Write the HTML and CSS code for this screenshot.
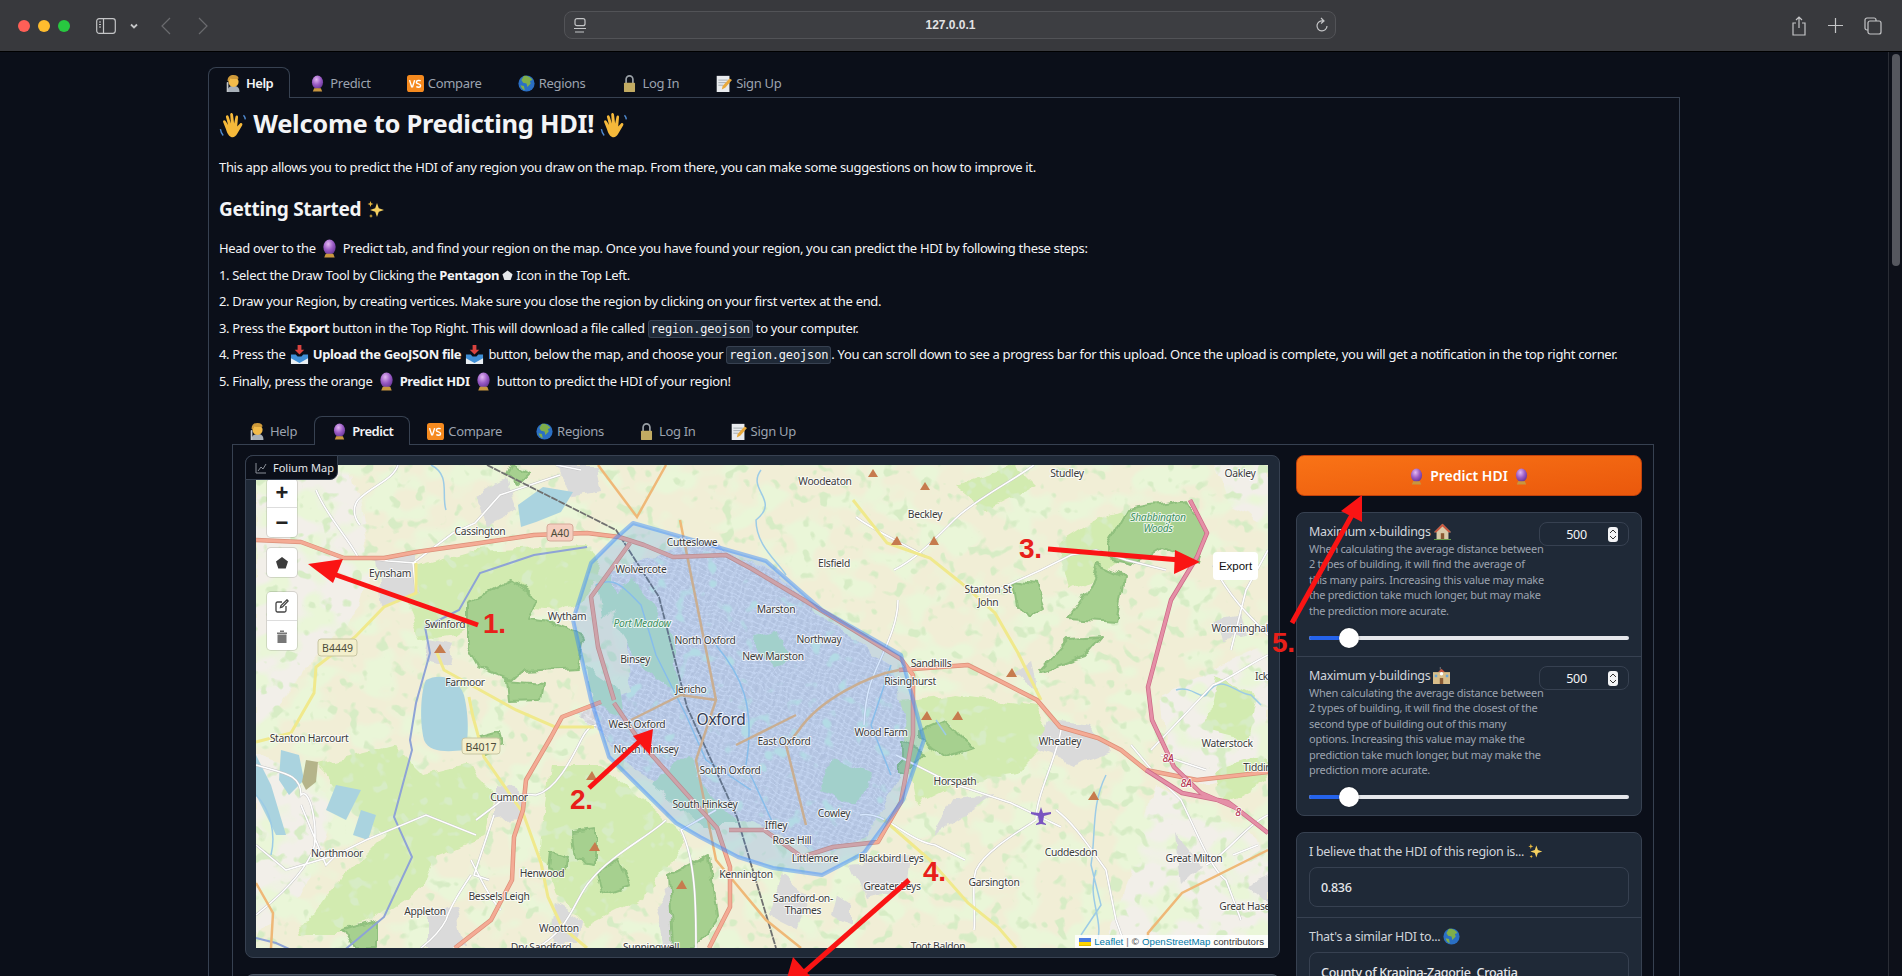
FILE: index.html
```html
<!DOCTYPE html>
<html lang="en">
<head>
<meta charset="utf-8">
<title>Predicting HDI</title>
<link rel="stylesheet" href="styles.css">
</head>
<body>
<svg class="defs" width="0" height="0" aria-hidden="true">
  <defs>
    <symbol id="e-ball" viewBox="0 0 20 20"><defs><radialGradient id="gb" cx=".4" cy=".3" r=".8"><stop offset="0" stop-color="#e3b7f2"/><stop offset=".5" stop-color="#9a5bc4"/><stop offset="1" stop-color="#5a2c8c"/></radialGradient></defs><ellipse cx="10" cy="8.500" rx="6.500" ry="8" fill="url(#gb)"/><path d="M6 15.500h8l1.500 4h-11z" fill="#c8963e"/></symbol>
    <symbol id="e-help" viewBox="0 0 20 20"><path d="M3 20c0-5 2-7 7-7s7 2 7 7z" fill="#a8b0b8"/><circle cx="10" cy="8" r="6" fill="#f2bb4a"/><path d="M3 7c0-5 3-7 7-7s6 2 6 4c-3 1-7 1-10 0 0 2-1 3-3 3z" fill="#cf9a3a"/><path d="M2 20V9c0-1 2-1 2 0v11z" fill="#c2c6ca"/></symbol>
    <symbol id="e-vs" viewBox="0 0 20 20"><rect width="20" height="20" rx="3" fill="#f58a1f"/><path d="M3 6l2.500 8h1L9 6M16 7c-1-1-5-1-5 1.500s5 1.500 5 4-4 2-5 1" fill="none" stroke="#fff" stroke-width="1.700"/></symbol>
    <symbol id="e-globe" viewBox="0 0 20 20"><circle cx="10" cy="10" r="9.500" fill="#2a6fc4"/><path d="M7 1c3-1 8 1 10 5l-3 1 1 3-4 4-1-4-4-1-2-3zM3 12l4 1 1 5c-3-1-4-3-5-6z" fill="#7fae4a"/></symbol>
    <symbol id="e-lock" viewBox="0 0 20 20"><path d="M6 10V5a4 4 0 0 1 8 0v5" fill="none" stroke="#9aa0a6" stroke-width="2"/><rect x="3.500" y="9" width="13" height="11" rx="1" fill="#c2ab62"/></symbol>
    <symbol id="e-memo" viewBox="0 0 20 20"><rect x="2" y="1" width="15" height="19" fill="#e9ebee"/><path d="M4 6h11M4 9h9M4 12h6" stroke="#9aa0a6"/><path d="M8 17l1-4 8-9 3 2-8 9z" fill="#e8a93c"/></symbol>
    <symbol id="e-wave" viewBox="0 0 20 20"><path d="M5 13L3 8c-.5-1.500 1-2 1.700-.8L6.500 10 5 4.500c-.4-1.500 1.400-2 1.900-.6L8.500 9 8 2.500c0-1.500 1.800-1.500 2 0l.8 6.500 1-5c.3-1.400 2-1 1.800.4L13 11l2-2c1-1 2.300.2 1.500 1.300l-3.500 6C11 20 7 20 5 13z" fill="#f6b93a"/><path d="M1 13c.3 2 1 3.500 2 4.500M17.500 3c.8.8 1.200 1.800 1.300 3" stroke="#4f8ad0" fill="none"/></symbol>
    <symbol id="e-spark" viewBox="0 0 20 20"><path d="M11 3l1.800 5.200L18 10l-5.200 1.800L11 17l-1.800-5.200L4 10l5.200-1.800z" fill="#f5d060"/><path d="M4.500 1l.8 2.200 2.200.8-2.200.8-.8 2.200-.8-2.200L1.500 4l2.200-.8zM5 14l.6 1.400L7 16l-1.400.6L5 18l-.6-1.400L3 16l1.400-.6z" fill="#e8b93f"/></symbol>
    <symbol id="e-inbox" viewBox="0 0 20 20"><path d="M8 0h4v5h3l-5 5-5-5h3z" fill="#d9433f"/><path d="M1 10h5l2 2h4l2-2h5v9H1z" fill="#3f8fd6"/><path d="M1 14l9 5 9-5v6H1z" fill="#e9eef2"/></symbol>
    <symbol id="e-house" viewBox="0 0 20 20"><path d="M10 1L0 11h3v8h14v-8h3z" fill="#d8c9a8"/><path d="M10 1L0 11h3l7-7 7 7h3z" fill="#c9553d"/><rect x="8" y="12" width="4" height="7" fill="#8a5a34"/><path d="M0 19h20v1H0z" fill="#6fae4f"/></symbol>
    <symbol id="e-school" viewBox="0 0 20 20"><rect x="0" y="6" width="20" height="14" fill="#d8bd8a"/><path d="M6 6l4-4 4 4z" fill="#c9553d"/><rect x="8" y="0" width="1" height="3" fill="#888"/><rect x="2" y="9" width="3" height="3" fill="#6aa6d8"/><rect x="15" y="9" width="3" height="3" fill="#6aa6d8"/><rect x="8" y="13" width="4" height="7" fill="#8a5a34"/><circle cx="10" cy="8" r="2" fill="#fff"/></symbol>
  </defs>
</svg>

<header class="chrome">
  <div class="lights"><i class="light red"></i><i class="light amber"></i><i class="light green"></i></div>
  <svg class="tool sidebar-ic" width="20" height="16" viewBox="0 0 20 16"><rect x=".7" y=".7" width="18.600" height="14.600" rx="2.500"/><path d="M7.500 1v14M3 4h2M3 6.500h2M3 9h2"/></svg>
  <svg class="tool chev-ic" width="8" height="6" viewBox="0 0 8 6"><path d="M1 1.500l3 3 3-3"/></svg>
  <svg class="tool dim back-ic" width="10" height="18" viewBox="0 0 10 18"><path d="M9 1L1 9l8 8"/></svg>
  <svg class="tool dim fwd-ic" width="10" height="18" viewBox="0 0 10 18"><path d="M1 1l8 8-8 8"/></svg>
  <div class="address">
    <svg class="tool site-ic" width="12" height="15" viewBox="0 0 12 15"><rect x="1" y=".7" width="10" height="7" rx="2"/><path d="M0 10.500h12M1 14h9"/></svg>
    <span class="url">127.0.0.1</span>
    <svg class="tool reload-ic" width="13" height="16" viewBox="0 0 13 16"><path d="M8 4a5 5 0 1 0 4 5M6 1l3 3-3 2.500"/></svg>
  </div>
  <div class="chrome-right">
    <svg class="tool" width="16" height="20" viewBox="0 0 16 20"><path d="M8 12V1M5 4l3-3 3 3M5 7H2v12h12V7h-3"/></svg>
    <svg class="tool" width="15" height="15" viewBox="0 0 15 15"><path d="M7.500 0v15M0 7.500h15"/></svg>
    <svg class="tool" width="18" height="18" viewBox="0 0 18 18"><rect x="4" y="4" width="13" height="13" rx="2"/><path d="M4 13H3a2 2 0 0 1-2-2V3a2 2 0 0 1 2-2h7a2 2 0 0 1 2 2v1"/></svg>
  </div>
</header>

<div class="viewport">
  <main class="app">
    <nav class="tabs">
      <span class="tab active"><svg class="em"><use href="#e-help"/></svg>Help</span>
      <span class="tab"><svg class="em"><use href="#e-ball"/></svg>Predict</span>
      <span class="tab"><svg class="em"><use href="#e-vs"/></svg>Compare</span>
      <span class="tab"><svg class="em"><use href="#e-globe"/></svg>Regions</span>
      <span class="tab"><svg class="em"><use href="#e-lock"/></svg>Log In</span>
      <span class="tab"><svg class="em"><use href="#e-memo"/></svg>Sign Up</span>
    </nav>
    <section class="panel">
      <h1><svg class="em"><use href="#e-wave"/></svg> Welcome to Predicting HDI! <svg class="em"><use href="#e-wave"/></svg></h1>
      <p class="intro">This app allows you to predict the HDI of any region you draw on the map. From there, you can make some suggestions on how to improve it.</p>
      <h2>Getting Started <svg class="em"><use href="#e-spark"/></svg></h2>
      <p>Head over to the <svg class="em"><use href="#e-ball"/></svg> Predict tab, and find your region on the map. Once you have found your region, you can predict the HDI by following these steps:</p>
      <p>1. Select the Draw Tool by Clicking the <b>Pentagon</b> <svg class="pent" viewBox="0 0 12 12"><path d="M6 .5l5.500 4-2 6.500H2.500l-2-6.500z"/></svg> Icon in the Top Left.</p>
      <p>2. Draw your Region, by creating vertices. Make sure you close the region by clicking on your first vertex at the end.</p>
      <p>3. Press the <b>Export</b> button in the Top Right. This will download a file called <code>region.geojson</code> to your computer.</p>
      <p>4. Press the <svg class="em"><use href="#e-inbox"/></svg> <b>Upload the GeoJSON file</b> <svg class="em"><use href="#e-inbox"/></svg> button, below the map, and choose your <code>region.geojson</code>. You can scroll down to see a progress bar for this upload. Once the upload is complete, you will get a notification in the top right corner.</p>
      <p>5. Finally, press the orange <svg class="em"><use href="#e-ball"/></svg> <b>Predict HDI</b> <svg class="em"><use href="#e-ball"/></svg> button to predict the HDI of your region!</p>

      <div class="inner">
        <nav class="tabs inner-tabs">
          <span class="tab"><svg class="em"><use href="#e-help"/></svg>Help</span>
          <span class="tab active"><svg class="em"><use href="#e-ball"/></svg>Predict</span>
          <span class="tab"><svg class="em"><use href="#e-vs"/></svg>Compare</span>
          <span class="tab"><svg class="em"><use href="#e-globe"/></svg>Regions</span>
          <span class="tab"><svg class="em"><use href="#e-lock"/></svg>Log In</span>
          <span class="tab"><svg class="em"><use href="#e-memo"/></svg>Sign Up</span>
        </nav>
        <div class="inner-panel">
          <div class="left-col">
            <div class="map-block">
              <div class="map-label"><svg class="chart-ic" width="12" height="12" viewBox="0 0 12 12"><path d="M1 1v10h10M3 9l3-4 2 2 3-5"/></svg>Folium Map</div>
              <div class="map">
                <svg class="map-svg" viewBox="0 0 1012 483" width="1012" height="483">
                  <defs>
                    <filter id="wobble" x="-5%" y="-5%" width="110%" height="110%"><feTurbulence type="fractalNoise" baseFrequency=".04" numOctaves="3" seed="4"/><feDisplacementMap in="SourceGraphic" scale="14" xChannelSelector="R" yChannelSelector="G"/></filter>
                    <filter id="fields" x="0" y="0" width="100%" height="100%"><feTurbulence type="fractalNoise" baseFrequency=".028 .035" numOctaves="2" seed="11"/><feColorMatrix values="0 0 0 0 .82  0 0 0 0 .92  0 0 0 0 .69  7 0 0 0 -3.400"/></filter>
                    <filter id="specks" x="0" y="0" width="100%" height="100%"><feTurbulence type="fractalNoise" baseFrequency=".075" numOctaves="2" seed="23"/><feColorMatrix values="0 0 0 0 .68  0 0 0 0 .84  0 0 0 0 .56  10 0 0 0 -6.100"/></filter>
                    <filter id="parks" x="0" y="0" width="100%" height="100%"><feTurbulence type="fractalNoise" baseFrequency=".06" numOctaves="2" seed="7"/><feColorMatrix values="0 0 0 0 .66  0 0 0 0 .87  0 0 0 0 .74  8 0 0 0 -4.900"/></filter>
                    <clipPath id="city-clip"><path d="M410 85l50-5 60 30 50 45 65 45 15 50-5 60-35 65-50 12-70-30-60-20-50-30-30-35-30-25 55-20-5-60-15-60z"/></clipPath>
                    <pattern id="streets" width="14" height="10" patternUnits="userSpaceOnUse" patternTransform="rotate(24)">
                      <rect width="14" height="10" fill="#d5d5db"/>
                      <path d="M0 3.500h14M0 8.500h14M5 0v10M11 0v10" stroke="#eeeef2" stroke-width=".8"/>
                      <path d="M2 0v3M8 3v5" stroke="#bcbcc6" stroke-width=".5"/>
                    </pattern>
                    <path id="a-roads" d="M0 75l45 2 43 16h40l32-6 64-9 54-8 53-2 32 4 25 8 29 12 53-2 26 14 77 46 72 44 12 16v60l-12 67-23 40-45 5-31 10-38-27h-35M374 78l-39 54 7 50 16 53M358 238l27 40 76 85 13 39v40l-21 41M345 237l-39 15-11 20-25 43-3 30-9 27-2 43-21 40-36 28M643 205l69-5 30 15 39 20 23 27 38 11 23 12 25 20 51 10 71-8"/>
                    <path id="m-roads" d="M934 35l17 33-10 24-26 43-23 87 4 33 22 47 27 26 35 15 32 25M890 305l36 23 46 9 8 6"/>
                    <g id="white-roads">
                      <path d="M60 25c10 25 30 45 42 67M142 0c-5 15-25 20-40 35-6 8-4 18 2 25M102 92l30 4 28 2M160 128l-3-30 40-30 22-10 25-28 60-20M325 5l-25-5"/>
                      <path d="M0 300c25 8 45 8 45 30 10-10 20 45 10 60-10 20-30 40-55 60M45 340l25 60 12-12M0 380l30 25 50-15 30-15 60-25 50 20"/>
                      <path d="M220 355l20-15c8-8 25-12 40-10 20-5 35-35 45-55 5-10 10-15 15-15M215 410c-10 15-20 30-25 45-5 10-15 20-25 28M215 395c10 20 20 40 30 50M238 350l-20 60 15 5M410 355c-15 15-55 35-75 60-15 15-20 50-55 68M460 345l-35 20c15 30 15 80 15 118"/>
                      <path d="M642 135c0 30-20 60-28 85-3 10-5 20-6 40M778 0c-20 15-60 35-80 55-25 25-40 40-60 50M604 350c25-5 45 25 75 30l30 15M640 290l55 28 60 20 50 24M805 265c-5 30-25 65-25 90-15 10-50 30-60 50-5 15 0 45-2 60M800 345c20 15 35 40 50 60l10 50 10 28M1012 190c-20 10-40 25-55 30l-62 65M905 290l45 15M875 280l25 30 25 25c15 30 30 70 45 80l15 40M957 100c15 30 35 50 55 70M975 185l15-60 22-40M950 400c20-10 40-40 62-50M1002 380l-25 10"/>
                      <path d="M600 52c20 15 45 25 70 40M730 130l55-25 30-15 25-5 30 10 40 10"/>
                    </g>
                  </defs>
                  <g class="soft">
                    <rect class="land" width="1012" height="483"/>
                    <path class="bare wob" d="M0 0h95l20 90-10 50-60 70-45 60zM0 290l60 20 20 40-30 70-50 50zM905 230l60-30 47-20v120l-60 20-40-10zM900 320l112 60v103H850zM1012 0v60l-40-20-20-60z"/>
                    <rect width="1012" height="483" class="noise-fields"/>
                    <g class="light-green wob">
                      <path d="M150 105l70-20 110-5 15 25-15 30-30 10-55-5-45 30-35 5-15-35z"/>
                      <path d="M295 300h50l55 45 30 30-30 45-30 20-40 20-30-30-15-50z"/>
                      <path d="M60 300l80-20 30 30 40-10 30 30-10 40-50 20-15 30-45 30-40 20-40 0 30-40 30-30 30-30-40-30-20-30z"/>
                      <path d="M620 240l80-10 80 10 20 30-40 40-60 10-40 20-10-50z"/>
                      <path d="M800 80l40-25 30-10 20 30-40 30-40 20zM700 20l60-20 20 20-50 25zM960 210l40 20-10 45-40-10zM960 305l50-15 2 25-45 25z"/>
                    </g>
                    <rect width="1012" height="483" class="noise-specks"/>
                    <g class="urban wob">
                      <path d="M120 92l40-2 5 40-40 10zM172 175l25 5-3 20-25-5zM220 30l30-15 10 30-30 15zM300 0l40 0 5 25-30 5zM240 320l20 5 5 25-25 5zM400 440l30-40 10 83-30 0zM170 450l30-10 10 43-40 0zM300 440l25 15-5 25-25 0zM345 250l20 0 30 30-30 10zM525 410l30 25-15 30-30-15zM595 400l60-10-5 35-40 10zM795 255l40 5 20 25-40 15-35-15zM960 155l25-5 5 20-25 5zM698 335l-20 35 60-40zM755 210l20-15 5 30zM920 370l25 30-20 20zM580 430l15 10 0 20-20-10zM990 420l22-10 0 30z"/>
                    </g>
                    <path class="city wob" d="M410 85l50-5 60 30 50 45 65 45 15 50-5 60-35 65-50 12-70-30-60-20-50-30-30-35-30-25 55-20-5-60-15-60z"/>
                    <g clip-path="url(#city-clip)"><rect width="1012" height="483" class="noise-parks"/></g>
                    <g class="meadow wob">
                      <path d="M353 132l25-17 17 23 22 37 7 53-39-26-25-40z"/>
                      <path d="M430 290l25 40 30 30-40 0-50-40zM495 170l25-5 15 30-20 10zM575 295l40 15-15 30-35-15zM330 200l30 20 5 30-30-10zM340 120l20-10 0 30-15 15z"/>
                    </g>
                    <g class="forest wob">
                      <path d="M213 138l43-23 25 17-9 23 23 3 33 14-6 30-55 3-11 10-32-13-11-20z"/>
                      <path d="M251 215l37 3-3 17-32 1z"/>
                      <path d="M850 80l20-35 60-10 20 35-8 25-37-13-30 18-25-5z"/>
                      <path d="M758 115l23 3 9 24-17 10-11-14z"/>
                      <path d="M842 100l27 12-8 46-50-3 19-27z"/>
                      <path d="M783 205l28-30 35-2-16 19-45 16z"/>
                      <path d="M666 265l23-10 27 28-27 9-23-17z"/>
                      <path d="M643 275l27 13-19 20-8-3z"/>
                      <path d="M88 465l32-10v28H99zM317 368l21-3v33l-18-3zM413 412l39-20 8 60-22 31h-21z"/>
                      <path d="M255 0l15 8-12 12-8-10zM295 385l15 5-2 20-15-5zM225 270l18-5 3 15-18 8zM340 405l25-10 10 25-30 10z"/>
                    </g>
                    <g class="water">
                      <path d="M170 215c12-6 30-5 38 15 6 25 4 50 0 55-15 2-35 3-40-10-5-20-3-50 2-60z"/>
                      <path d="M25 285l18 5 5 25-15 15-10-15zM80 320l25 5-15 30-20-10zM105 345l15 5-8 25-15-5zM0 290l15 30 15 50-10 0-20-40zM262 40l25-18 30 5-12 20-25 10-15 5z"/>
                    </g>
                    <g class="scrub"><path d="M50 295l12 2-2 20-10 8-4-8z"/></g>
                    <path class="river" d="M331 82l-53 8-54 18-21 37-34 17 5 26-14 50-6 37 2 10-18 67 18 40-28 60-43 36-32 5-33-15-20-5"/>
                    <path class="stream" d="M505 5c-15 20 20 30-5 50 0 25 20 40 30 55M340 120c20-10 30 5 45 20l15 50 30 60 20 45 45 30M460 180c25 30 40 60 30 120l30 65M0 330c15 15 20 40 15 60M635 200l-20 60 20 50M920 225c15-5 25 10 30 5 15-25 30 0 45 0l10 10M850 310c-15 30-10 60-15 90l10 40-20 30M175 0c20 10 10 30 15 45M690 270l-10-15M840 405c-10 30 10 50 0 78"/>
                    <use href="#white-roads" class="road-case"/>
                    <use href="#white-roads" class="road-white"/>
                    <path class="rail" d="M231 0l129 65 43 67 28 110 50 110 39 131"/>
                    <path class="road-yellow" d="M160 98v30l-32 14-29 30-39 30-2 26-23 40-35 9M181 188l7 17 36 20 36 20 39 17h39M213 232l4 20 11 40 39 56 18 50 7 34 14 30 25 21M597 35l34 43 43 15 30 24 35 31 23 40 23 47M628 355l46 40 38 43 30 24 18 21"/>
                    <path class="road-orange" d="M342 0l39 52 29-52M424 55l36 180-20 60 20 100 50 60 35 28M540 250l-20 10-40 20M643 205c-30 5-80 30-100 60l-8 10M1012 385l-86 43-34 40 0 15M0 418l17 30-2 35M460 235l-35-5-50 25M530 280l20 80"/>
                    <use href="#a-roads" class="a-case"/>
                    <use href="#a-roads" class="a-core"/>
                    <use href="#m-roads" class="m-case"/>
                    <use href="#m-roads" class="m-core"/>
                  </g>
                  <g class="peaks">
                    <path d="M178 188l6-9 6 9zM612 12l5-8 5 8zM664 25l5-8 5 8zM673 80l5-9 5 9zM635 80l6-9 5 9zM750 212l6-9 5 9zM665 255l6-9 5 9zM696 255l6-9 5 9zM832 335l6-9 5 9zM330 315l6-9 5 9zM333 386l6-9 5 9zM420 424l6-9 5 9z"/>
                  </g>
                  <path class="plane" d="M785 342l2 6 8-1v2l-7 2-1 6 3 2v1l-5-1-5 1v-1l3-2-1-6-7-2v-2l8 1z"/>
                  <path class="poly" d="M377 58l133 38 56 49 79 45 23 85-21 60-39 53-42 22-49-7-35-11-38-20-24-14-67-66-18-57-18-80 18-57 25-25z"/>
                  <g class="shield">
                    <rect x="62" y="174" width="39" height="17" rx="3"/>
                    <text x="81.500" y="186.500">B4449</text>
                    <rect x="206" y="273" width="38" height="16" rx="3"/>
                    <text x="225" y="285.500">B4017</text>
                  </g>
                  <g class="shield pinkish">
                    <rect x="291" y="59" width="26" height="17" rx="3"/>
                    <text x="304" y="72">A40</text>
                  </g>
                  <g class="labels">
                    <text x="224" y="70">Cassington</text><text x="134" y="112">Eynsham</text><text x="189" y="163">Swinford</text><text x="311" y="155">Wytham</text><text x="436" y="81">Cutteslowe</text><text x="385" y="108">Wolvercote</text><text x="520" y="148">Marston</text><text x="449" y="179">North Oxford</text><text x="379" y="198">Binsey</text><text x="517" y="195">New Marston</text><text x="563" y="178">Northway</text><text x="435" y="228">Jericho</text><text x="209" y="221">Farmoor</text><text x="381" y="263">West Oxford</text><text x="53" y="277">Stanton Harcourt</text><text x="390" y="288">North Hinksey</text><text x="474" y="309">South Oxford</text><text x="449" y="343">South Hinksey</text><text x="528" y="280">East Oxford</text><text x="625" y="271">Wood Farm</text><text x="675" y="202">Sandhills</text><text x="654" y="220">Risinghurst</text><text x="578" y="352">Cowley</text><text x="520" y="364">Iffley</text><text x="536" y="379">Rose Hill</text><text x="559" y="397">Littlemore</text><text x="635" y="397">Blackbird Leys</text><text x="636" y="425">Greater Leys</text><text x="490" y="413">Kennington</text><text x="547" y="437">Sandford-on-</text><text x="547" y="449">Thames</text><text x="682" y="485">Toot Baldon</text><text x="738" y="421">Garsington</text><text x="815" y="391">Cuddesdon</text><text x="938" y="397">Great Milton</text><text x="995" y="445">Great Haseley</text><text x="971" y="282">Waterstock</text><text x="1012" y="306">Tiddington</text><text x="985" y="167">Worminghall</text><text x="1015" y="215">Ickford</text><text x="699" y="320">Horspath</text><text x="804" y="280">Wheatley</text><text x="732" y="128">Stanton St</text><text x="732" y="141">John</text><text x="578" y="102">Elsfield</text><text x="669" y="53">Beckley</text><text x="81" y="392">Northmoor</text><text x="253" y="336">Cumnor</text><text x="286" y="412">Henwood</text><text x="243" y="435">Bessels Leigh</text><text x="169" y="450">Appleton</text><text x="303" y="467">Wootton</text><text x="569" y="20">Woodeaton</text><text x="811" y="12">Studley</text><text x="984" y="12">Oakley</text><text x="285" y="486">Dry Sandford</text><text x="395" y="486">Sunningwell</text>
                    <text class="big" x="465" y="260">Oxford</text>
                  </g>
                  <g class="labels wood"><text x="386" y="162">Port Meadow</text><text x="902" y="56">Shabbington</text><text x="902" y="67">Woods</text></g>
                  <g class="labels moto"><text x="912" y="297">8A</text><text x="930" y="322">8A</text><text x="982" y="351">8</text></g>
                </svg>
                <div class="zoom-ctl ctl"><span>+</span><span class="thin">&#8722;</span></div>
                <div class="draw-ctl ctl"><span><svg width="14" height="14" viewBox="0 0 14 14"><path class="ctl-fill" d="M7 1l6 4.500-2.300 7H3.300L1 5.500z"/></svg></span></div>
                <div class="edit-ctl ctl">
                  <span><svg width="14" height="14" viewBox="0 0 14 14"><path class="ctl-line" d="M11 7v4.500a1.500 1.500 0 0 1-1.500 1.500h-7A1.500 1.500 0 0 1 1 11.500v-7A1.500 1.500 0 0 1 2.500 3H7"/><path class="ctl-line" d="M5.500 8.500l.5-2L12 .8l1.200 1.200L7.500 8z"/></svg></span>
                  <span><svg width="12" height="14" viewBox="0 0 12 14"><path class="ctl-fill muted" d="M1 3.500h10V5H1zM4 1.500h4v1.500H4zM1.500 5.500h9V14h-9z"/></svg></span>
                </div>
                <div class="export">Export</div>
                <div class="attrib"><svg width="12" height="8" viewBox="0 0 12 8"><path fill="#4C7BE1" d="M0 0h12v4H0z"/><path fill="#FFD500" d="M0 4h12v3H0z"/><path fill="#E0BC00" d="M0 7h12v1H0z"/></svg> <span class="link">Leaflet</span> <span class="sep">|</span> © <span class="link">OpenStreetMap</span> contributors</div>
              </div>
            </div>
            <div class="upload-bar"></div>
          </div>
          <aside class="right-col">
            <button class="predict"><svg class="em"><use href="#e-ball"/></svg> Predict HDI <svg class="em"><use href="#e-ball"/></svg></button>
            <div class="card">
              <div class="field slider-field">
                <div class="slider-head">
                  <div class="slider-text">
                    <div class="label">Maximum x-buildings <svg class="em"><use href="#e-house"/></svg></div>
                    <div class="info">When calculating the average distance between<br>2 types of building, it will find the average of<br>this many pairs. Increasing this value may make<br>the prediction take much longer, but may make<br>the prediction more acurate.</div>
                  </div>
                  <div class="num">500<span class="spin"><svg width="8" height="13" viewBox="0 0 8 13"><path d="M1 5l3-3 3 3M1 8l3 3 3-3"/></svg></span></div>
                </div>
                <div class="slider"><div class="fill"></div><div class="thumb"></div></div>
              </div>
              <div class="field slider-field">
                <div class="slider-head">
                  <div class="slider-text">
                    <div class="label">Maximum y-buildings <svg class="em"><use href="#e-school"/></svg></div>
                    <div class="info">When calculating the average distance between<br>2 types of building, it will find the closest of the<br>second type of building out of this many<br>options. Increasing this value may make the<br>prediction take much longer, but may make the<br>prediction more acurate.</div>
                  </div>
                  <div class="num">500<span class="spin"><svg width="8" height="13" viewBox="0 0 8 13"><path d="M1 5l3-3 3 3M1 8l3 3 3-3"/></svg></span></div>
                </div>
                <div class="slider"><div class="fill"></div><div class="thumb"></div></div>
              </div>
            </div>
            <div class="card">
              <div class="field">
                <div class="label">I believe that the HDI of this region is... <svg class="em"><use href="#e-spark"/></svg></div>
                <div class="textbox">0.836</div>
              </div>
              <div class="field">
                <div class="label">That's a similar HDI to... <svg class="em"><use href="#e-globe"/></svg></div>
                <div class="textbox">County of Krapina-Zagorje, Croatia</div>
              </div>
            </div>
          </aside>
        </div>
      </div>
    </section>
  </main>
  <div class="scrollbar"><div class="scroll-thumb"></div></div>
</div>

<svg class="arrows" width="1902" height="976" viewBox="0 0 1902 976">
  <path class="arrow-line" d="M478 625L325 571"/><path class="arrow-head" d="M308 564l35-5-10 24z"/>
  <path class="arrow-line" d="M589 788L640 741"/><path class="arrow-head" d="M653 729l-3 26-17-19z"/>
  <path class="arrow-line" d="M1048 549L1180 560"/><path class="arrow-head" d="M1200 562l-26 12 1-24z"/>
  <path class="arrow-line" d="M909 880L800 976"/><path class="arrow-head" d="M785 985l8-28 17 19z"/>
  <path class="arrow-line" d="M1292 623L1352 515"/><path class="arrow-head" d="M1362 495l0 27-21-11z"/>
  <text class="arrow-text" x="483" y="633">1.</text>
  <text class="arrow-text" x="570" y="809">2.</text>
  <text class="arrow-text" x="1019" y="558">3.</text>
  <text class="arrow-text" x="923" y="881">4.</text>
  <text class="arrow-text" x="1272" y="652">5.</text>
</svg>
</body>
</html>
```
FILE: styles.css
```css
* { box-sizing: border-box; }
html, body { margin: 0; height: 976px; overflow: hidden; }
body {
  display: flex; flex-direction: column; position: relative;
  background: #0b0f19; color: #f3f4f6; letter-spacing: -.3px;
  font-family: "Noto Sans", "Open Sans", sans-serif; font-size: 13px;
}
.defs { position: absolute; }

/* browser chrome */
.chrome {
  height: 52px; flex: none; display: flex; align-items: center; letter-spacing: 0;
  background: #38393d; border-bottom: 1px solid #000; position: relative; padding-left: 18px;
}
.lights { display: flex; gap: 8px; margin-right: 26px; }
.light { width: 12px; height: 12px; border-radius: 50%; display: block; }
.red { background: #ff5f57; } .amber { background: #febc2e; } .green { background: #28c840; }
.tool { fill: none; stroke: #c4c5c7; stroke-width: 1.200; display: block; flex: none; }
.tool.dim { stroke: #6a6b6f; }
.sidebar-ic { margin-right: 14px; } .chev-ic { margin-right: 23px; stroke-width: 1.800; }
.back-ic { margin-right: 27px; }
.address {
  position: absolute; left: 564px; width: 772px; top: 11px; height: 28px;
  display: flex; align-items: center; justify-content: space-between; padding: 0 7px 0 9px;
  background: #3d3e42; border: 1px solid #525357; border-radius: 8px;
}
.url { font-family: "Liberation Sans", sans-serif; font-size: 12px; font-weight: 700; color: #e2e2e3; }
.chrome-right { margin-left: auto; display: flex; align-items: center; gap: 21px; padding-right: 20px; }

.viewport { flex: 1; display: flex; min-height: 0; overflow: hidden; }
.app { flex: 1; min-width: 0; }
.scrollbar { width: 14px; flex: none; background: #0d1019; border-left: 1px solid #2a2d35; padding: 2px 3px; }
.scroll-thumb { height: 212px; width: 8px; background: #55575e; border-radius: 4px; }

/* tabs */
.tabs { display: flex; gap: 2px; width: 1472px; margin: 15px auto 0; height: 30px; align-items: stretch; }
.inner-tabs { width: auto; margin: 0; height: 28px; gap: 0; }
.tab {
  display: flex; align-items: center; gap: 4px; padding: 0 16px; color: #9ca3af; font-size: 13px;
  border: 1px solid transparent; border-bottom: none; border-radius: 8px 8px 0 0; margin-bottom: -1px; white-space: nowrap;
}
.tab.active { color: #f3f4f6; font-weight: 600; letter-spacing: -.5px; border-color: #374151; background: #0b0f19; position: relative; z-index: 1; height: 31px; }
.inner-tabs .tab.active { height: 29px; }
.em { width: 17px; height: 17px; vertical-align: -4px; flex: none; }

.panel {
  width: 1472px; margin: 0 auto; padding: 8px 13px 0 10px; height: 900px;
  border: 1px solid #374151; border-bottom: none;
}
h1 { margin: 0; font-size: 25.500px; line-height: 34px; font-weight: 700; white-space: nowrap; }
h1 .em { width: 28px; height: 28px; vertical-align: -6px; }
h2 { margin: 18px 0 12px; font-size: 19px; line-height: 27px; font-weight: 700; }
h2 .em { width: 20px; height: 20px; vertical-align: -4px; }
p { margin: 0; height: 26.500px; line-height: 26.500px; font-size: 13px; letter-spacing: -.33px; white-space: nowrap; }
p .em { width: 19px; height: 19px; margin: 0 1px; vertical-align: -5px; }
p.intro { margin-top: 16px; height: 22px; line-height: 22px; }
p b { font-weight: 700; }
.pent { width: 11px; height: 11px; fill: #e5e7eb; vertical-align: -1px; }
code {
  font-family: "DejaVu Sans Mono", monospace; font-size: 12px; letter-spacing: -.15px; background: #1f2937;
  border: 1px solid #374151; border-radius: 3px; padding: 1px 2px;
}

.inner { margin: 22px 12px 0 13px; }
.inner-panel { border: 1px solid #374151; border-bottom: none; display: flex; gap: 16px; padding: 10px 11px 0 12px; height: 540px; }
.left-col { width: 1035px; flex: none; }
.right-col { width: 346px; flex: none; display: flex; flex-direction: column; gap: 16px; }

/* map */
.map-block {
  position: relative; background: #1f2937; border: 1px solid #374151; border-radius: 8px;
  padding: 9px 11px 9px 10px;
}
.map-label {
  position: absolute; left: -1px; top: -1px; z-index: 3; height: 25px; width: 93px;
  display: flex; align-items: center; gap: 6px; padding-left: 9px; letter-spacing: 0;
  background: #0b0f19; border: 1px solid #374151; border-top-left-radius: 8px; border-bottom-right-radius: 8px;
  font-size: 11px; color: #e5e7eb;
}
.chart-ic { fill: none; stroke: #8a8f98; }
.map { position: relative; width: 1012px; height: 483px; overflow: hidden; background: #f0eed5; font-family: "Liberation Sans", sans-serif; letter-spacing: 0; }
.map-svg { display: block; }
.soft { filter: blur(.35px); }
.wob { filter: url(#wobble); }
.land { fill: #f1eed6; }
.bare { fill: #f2efe9; }
.noise-fields { filter: url(#fields); }
.noise-specks { filter: url(#specks); }
.noise-parks { filter: url(#parks); }
.light-green path { fill: #d2ebb0; }
.urban path { fill: #dadada; }
.city { fill: url(#streets); }
.meadow path { fill: #bfe3bf; }
.forest path { fill: #a6d08f; stroke: #90c07e; stroke-width: 2; stroke-linejoin: round; }
.water path { fill: #aad3df; }
.scrub path { fill: #b5b48a; }
.river { fill: none; stroke: #8ea3d6; stroke-width: 2; }
.stream { fill: none; stroke: #9ccbe6; stroke-width: 1.500; }
.road-case { fill: none; stroke: #c4c4c4; stroke-width: 2.400; }
.road-white { fill: none; stroke: #fff; stroke-width: 1.600; }
.rail { fill: none; stroke: #707070; stroke-width: 1.800; stroke-dasharray: 7 1; }
.road-yellow { fill: none; stroke: #f0e98c; stroke-width: 3; }
.road-orange { fill: none; stroke: #efb877; stroke-width: 2.500; }
.a-case { fill: none; stroke: #dc8f78; stroke-width: 4.500; stroke-linejoin: round; }
.a-core { fill: none; stroke: #f4ab95; stroke-width: 3; stroke-linejoin: round; }
.m-case { fill: none; stroke: #cc6a86; stroke-width: 4.500; stroke-linejoin: round; }
.m-core { fill: none; stroke: #e58fa7; stroke-width: 3; stroke-linejoin: round; }
.peaks path { fill: #c67b4e; }
.plane { fill: #7a55c0; }
.poly { fill: #3388ff; fill-opacity: .2; stroke: #3388ff; stroke-opacity: .45; stroke-width: 4; stroke-linejoin: round; }
.shield rect { fill: #f3efcc; stroke: #c8c6a2; }
.shield text { font-family: "Noto Sans", sans-serif; font-size: 10.500px; fill: #4c4c3a; text-anchor: middle; }
.pinkish rect { fill: #f5cfc0; stroke: #d6a999; }
.labels text {
  font-family: "Noto Sans", sans-serif; font-size: 10.300px; letter-spacing: -.3px; fill: #3c3c3c; text-anchor: middle;
  stroke: rgba(255,255,255,.8); stroke-width: 2px; paint-order: stroke; stroke-linejoin: round;
}
.labels text.big { font-size: 15.500px; fill: #333b52; }
.wood text { fill: #3d9160; font-style: italic; }
.moto text { fill: #b02a4a; font-style: italic; }

.ctl {
  position: absolute; left: 11px; width: 30px; background: #fff; border-radius: 4px;
  box-shadow: 0 0 0 1px rgba(0,0,0,.12); color: #222; display: flex; flex-direction: column;
}
.ctl span { height: 29px; display: flex; align-items: center; justify-content: center; border-bottom: 1px solid #ddd; }
.ctl span:last-child { border-bottom: none; }
.zoom-ctl { top: 14px; font: 700 22px/1 "Liberation Sans", sans-serif; }
.draw-ctl { top: 83px; }
.edit-ctl { top: 127px; }
.ctl-fill { fill: #3c3c3c; } .ctl-fill.muted { fill: #777; }
.ctl-line { fill: none; stroke: #444; stroke-width: 1.300; }
.export {
  position: absolute; right: 10px; top: 87px; width: 45px; height: 28px; background: #fff; border-radius: 4px;
  display: flex; align-items: center; justify-content: center; color: #111; font-size: 11.500px;
}
.attrib {
  position: absolute; right: 0; bottom: 0; height: 13px; padding: 0 4px; display: flex; align-items: center; gap: 3px;
  background: rgba(255,255,255,.85); color: #333; font-size: 9.700px; white-space: nowrap;
}
.link { color: #0078a8; }
.sep { color: #777; }
.upload-bar { height: 40px; margin-top: 16px; background: #374151; border-radius: 8px 8px 0 0; border: 1px solid #4b5563; }

/* right column */
.predict {
  height: 41px; border: 1px solid #c2410c; border-radius: 8px; color: #fff; font: 600 14px "Noto Sans", sans-serif;
  background: linear-gradient(to bottom right, #f97316, #ea580c); flex: none;
}
.predict .em { width: 17px; height: 17px; margin: 0 2px; vertical-align: -4px; }
.card { background: #1f2937; border: 1px solid #374151; border-radius: 8px; flex: none; }
.field { padding: 9px 12px 10px 12px; border-bottom: 1px solid #374151; }
.field:last-child { border-bottom: none; }
.slider-head { display: flex; justify-content: space-between; align-items: flex-start; gap: 4px; }
.slider-text { width: 226px; flex: none; }
.label { font-size: 12.500px; line-height: 19px; color: #d1d5db; white-space: nowrap; }
.label .em { width: 17px; height: 17px; vertical-align: -4px; }
.info { font-size: 11px; line-height: 15.400px; letter-spacing: -.27px; color: #9ca3af; white-space: nowrap; }
.num {
  width: 90px; height: 24px; border: 1px solid #374151; border-radius: 8px; position: relative;
  display: flex; align-items: center; justify-content: center; padding-right: 15px; font-size: 12.500px; color: #f3f4f6; flex: none;
}
.spin {
  position: absolute; right: 10px; top: 4px; width: 10px; height: 15px; background: #f3f4f6; border-radius: 3px;
  display: flex; align-items: center; justify-content: center;
}
.spin svg { fill: none; stroke: #333; }
.slider { position: relative; height: 4px; background: #e5e7eb; border-radius: 2px; margin: 15px 0 6px; }
.slider-field .slider { margin: 18px 0 6px; }
.fill { width: 32px; height: 4px; background: #2563eb; border-radius: 2px 0 0 2px; }
.thumb { position: absolute; left: 30px; top: -8px; width: 20px; height: 20px; background: #fff; border-radius: 50%; box-shadow: 0 0 2px rgba(0,0,0,.4); }
.textbox {
  margin-top: 6px; height: 40px; border: 1px solid #374151; border-radius: 8px; padding: 0 11px;
  display: flex; align-items: center; font-size: 12.500px; color: #e5e7eb; font-weight: 500;
}

/* annotation arrows over the page */
.arrows { position: absolute; left: 0; top: 0; pointer-events: none; z-index: 10; }
.arrow-line { fill: none; stroke: #fa1414; stroke-width: 5; }
.arrow-head { fill: #fa1414; }
.arrow-text { font: 700 28px "Liberation Sans", sans-serif; fill: #e8201a; }
```
